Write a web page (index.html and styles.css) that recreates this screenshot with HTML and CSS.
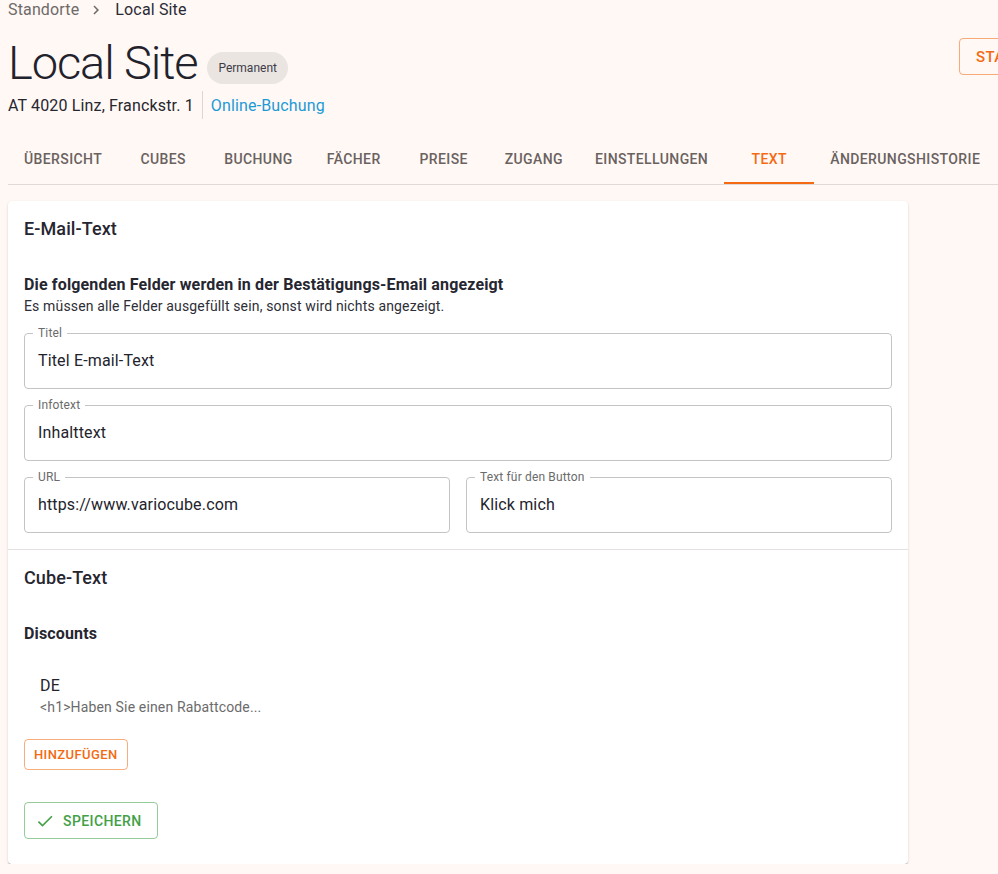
FILE: index.html
```html
<!DOCTYPE html>
<html lang="de">
<head>
<meta charset="utf-8">
<title>Local Site</title>
<link rel="stylesheet" href="styles.css">
</head>
<body>
<div class="page">
  <nav class="breadcrumb">
    <span class="crumb-link">Standorte</span>
    <svg class="crumb-sep" viewBox="0 0 24 24" width="18" height="18" aria-hidden="true"><path d="M10 6 8.59 7.41 13.17 12l-4.58 4.59L10 18l6-6z"/></svg>
    <span class="crumb-current">Local Site</span>
  </nav>

  <header class="title-row">
    <div class="title-left">
      <h1 class="title">Local Site</h1>
      <span class="chip">Permanent</span>
    </div>
    <button class="btn btn-orange btn-top">Status</button>
  </header>

  <div class="address-row">
    <span class="address">AT 4020 Linz, Franckstr. 1</span>
    <span class="vdivider"></span>
    <span class="link">Online-Buchung</span>
  </div>

  <div class="tabs">
    <div class="tab">Übersicht</div>
    <div class="tab">Cubes</div>
    <div class="tab">Buchung</div>
    <div class="tab">Fächer</div>
    <div class="tab">Preise</div>
    <div class="tab">Zugang</div>
    <div class="tab">Einstellungen</div>
    <div class="tab tab-active">Text</div>
    <div class="tab">Änderungshistorie</div>
  </div>

  <main class="card">
    <section class="section">
      <h2 class="section-title">E-Mail-Text</h2>
      <p class="lead">Die folgenden Felder werden in der Bestätigungs-Email angezeigt</p>
      <p class="sub">Es müssen alle Felder ausgefüllt sein, sonst wird nichts angezeigt.</p>

      <fieldset class="field">
        <legend>Titel</legend>
        <div class="value">Titel E-mail-Text</div>
      </fieldset>
      <fieldset class="field">
        <legend>Infotext</legend>
        <div class="value">Inhalttext</div>
      </fieldset>
      <div class="field-grid">
        <fieldset class="field">
          <legend>URL</legend>
          <div class="value">https://www.variocube.com</div>
        </fieldset>
        <fieldset class="field">
          <legend>Text für den Button</legend>
          <div class="value">Klick mich</div>
        </fieldset>
      </div>
    </section>

    <hr class="hdivider">

    <section class="section section-cube">
      <h2 class="section-title">Cube-Text</h2>
      <h3 class="sub-title">Discounts</h3>
      <div class="list-item">
        <div class="item-primary">DE</div>
        <div class="item-secondary">&lt;h1&gt;Haben Sie einen Rabattcode...</div>
      </div>
      <button class="btn btn-orange btn-small">Hinzufügen</button>
      <div class="save-row">
        <button class="btn btn-green">
          <svg class="icon" viewBox="0 0 24 24" width="20" height="20" aria-hidden="true"><path d="M9 16.17 4.83 12l-1.42 1.41L9 19 21 7l-1.41-1.41z"/></svg>
          Speichern
        </button>
      </div>
    </section>
  </main>
</div>
</body>
</html>
```

FILE: styles.css
```css
html, body {
  margin: 0;
  padding: 0;
  overflow: hidden;
}
body {
  background: #fff8f5;
  font-family: Roboto, "Noto Sans", sans-serif;
  color: #2a2a35;
  letter-spacing: 0.15px;
}
.page {
  width: 1150px;
  padding: 0 8px;
}
.breadcrumb {
  display: flex;
  align-items: center;
  height: 20px;
  font-size: 16px;
  line-height: 20px;
}
.crumb-link { color: #6e6a69; }
.crumb-sep {
  fill: #6e6a69;
  margin: 0 10px 0 8px;
}
.crumb-current { color: #2a2a35; }

.title-row {
  display: flex;
  align-items: flex-start;
  margin-top: 15px;
}
.title-left {
  flex: 0 0 951px;
  display: flex;
  align-items: center;
}
.title {
  margin: 0;
  font-size: 47px;
  font-weight: 300;
  line-height: 56px;
  letter-spacing: -1.1px;
  color: #22222c;
}
.chip {
  display: inline-flex;
  align-items: center;
  height: 32px;
  margin: 10px 0 0 10px;
  padding: 0 11px;
  border-radius: 16px;
  background: #ebe5e2;
  color: #3c3c48;
  font-size: 12px;
  letter-spacing: 0;
}
.btn {
  font-family: Roboto, "Noto Sans", sans-serif;
  font-weight: 500;
  text-transform: uppercase;
  letter-spacing: 0.4px;
  background: transparent;
  border-radius: 4px;
  cursor: pointer;
  display: inline-flex;
  align-items: center;
  box-sizing: border-box;
}
.btn-orange {
  color: #f46a12;
  border: 1px solid rgba(244, 106, 18, 0.55);
}
.btn-top {
  height: 37px;
  margin-top: 3px;
  padding: 0 16px;
  font-size: 15px;
  white-space: nowrap;
}

.address-row {
  display: flex;
  align-items: center;
  height: 28px;
  font-size: 16px;
}
.address { color: #26262f; }
.vdivider {
  width: 1px;
  align-self: stretch;
  background: #dcd6d3;
  margin: 0 8px 0 8px;
}
.link { color: #1d9ad6; }

.tabs {
  display: flex;
  margin-top: 17px;
  border-bottom: 1px solid #e0dbd8;
}
.tab {
  min-width: 90px;
  box-sizing: border-box;
  height: 48px;
  padding: 0 16px;
  display: flex;
  align-items: center;
  justify-content: center;
  font-size: 14px;
  font-weight: 500;
  letter-spacing: 0.4px;
  text-transform: uppercase;
  color: #6a625f;
  border-bottom: 2px solid transparent;
}
.tab-active {
  color: #f46a12;
  border-bottom-color: #f46a12;
}

.card {
  display: block;
  width: 900px;
  margin-top: 16px;
  background: #fff;
  border-radius: 4px;
  box-shadow: 0 2px 1px -1px rgba(0,0,0,0.2), 0 1px 1px 0 rgba(0,0,0,0.14), 0 1px 3px 0 rgba(0,0,0,0.12);
}
.section {
  padding: 16px 16px 16px;
}
.section-title {
  margin: 0;
  font-size: 18px;
  font-weight: 500;
  line-height: 24px;
  letter-spacing: 0.1px;
  color: #262630;
}
.lead {
  margin: 33px 0 0;
  font-size: 16px;
  font-weight: 700;
  line-height: 22px;
  color: #262630;
}
.sub {
  margin: 0;
  font-size: 14px;
  line-height: 20px;
  color: #2e2e36;
}
.field {
  margin: 9px 0 0;
  padding: 0 13px;
  border: 1px solid #c4c4c4;
  border-radius: 4px;
  min-width: 0;
}
.field + .field, .field-grid { margin-top: 8px; }
.field legend {
  padding: 0 5px;
  margin-left: -5px;
  font-size: 12px;
  line-height: 16px;
  color: #6b6b6b;
}
.value {
  font-size: 16px;
  line-height: 24px;
  padding: 8px 0 15px;
  color: #23232c;
}
.field-grid {
  display: grid;
  grid-template-columns: 1fr 1fr;
  column-gap: 16px;
}
.field-grid .field { margin-top: 0; }

.hdivider {
  margin: 0;
  border: none;
  border-top: 1px solid #e3e0df;
}
.section-cube {
  padding-top: 16px;
  padding-bottom: 25px;
}
.sub-title {
  margin: 32px 0 0;
  font-size: 16px;
  font-weight: 700;
  line-height: 24px;
  color: #262630;
}
.list-item {
  padding: 28px 16px 0;
}
.item-primary {
  font-size: 16px;
  line-height: 24px;
  color: #23232c;
}
.item-secondary {
  font-size: 14px;
  line-height: 20px;
  color: #6b6b6b;
  margin-top: -1px;
}
.btn-small {
  margin-top: 22px;
  height: 31px;
  padding: 0 9px;
  font-size: 13px;
}
.save-row {
  margin-top: 32px;
}
.btn-green {
  color: #43a047;
  border: 1px solid rgba(67, 160, 71, 0.55);
  height: 37px;
  padding: 0 15px 0 10px;
  font-size: 14px;
}
.icon {
  fill: #43a047;
  margin-right: 8px;
}
```
